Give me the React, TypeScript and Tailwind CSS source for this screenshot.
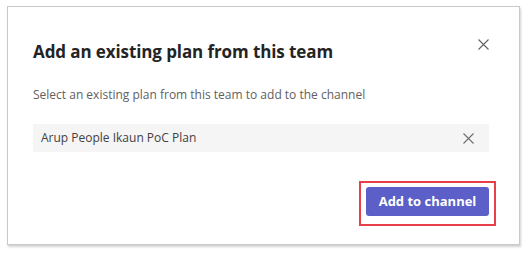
import React from "react";

function Cross({ size = 11, color = "#616161" }: { size?: number; color?: string }) {
  return (
    <svg width={size} height={size} viewBox="0 0 11 11" fill="none">
      <path d="M0.5 0.5 L10.5 10.5 M10.5 0.5 L0.5 10.5" stroke={color} strokeWidth="1.1" />
    </svg>
  );
}

export default function App() {
  return (
    <div
      className="h-[256px] w-[530px] bg-white pl-[7px] pt-[6px]"
      style={{ fontFamily: '"Open Sans", "Noto Sans", sans-serif' }}
    >
      <div className="flex h-[239px] w-[513px] flex-col border border-[#c9c9c9] bg-white pl-[25px] pr-[30px] shadow-[1px_2px_2px_rgba(0,0,0,0.18)]">
        <div className="mt-[33px] flex items-start justify-between">
          <h1 className="text-[17px] font-bold leading-[24px] tracking-[-0.1px] text-[#242424]">
            Add an existing plan from this team
          </h1>
          <button className="mr-[-1px] mt-[-3px] flex h-[14px] w-[14px] items-center justify-center" aria-label="Close">
            <Cross size={11} color="#616161" />
          </button>
        </div>
        <p className="mt-[22px] text-[12px] leading-[18px] text-[#616161]">
          Select an existing plan from this team to add to the channel
        </p>
        <div className="mt-[20px] flex h-[28px] items-center justify-between bg-[#f5f5f5] pl-[8px] pr-[15px]">
          <span className="text-[12px] text-[#424242]">Arup People Ikaun PoC Plan</span>
          <Cross size={11} color="#6e6e6e" />
        </div>
        <div className="mr-[-7px] mt-[29px] flex justify-end">
          <div className="border-2 border-[#e8404a] px-[5px] pb-[8px] pt-[4px]">
            <button className="flex h-[29px] w-[123px] items-center justify-center rounded-[3px] bg-[#5b5fc7] text-[13px] font-bold text-white">
              Add to channel
            </button>
          </div>
        </div>
      </div>
    </div>
  );
}
